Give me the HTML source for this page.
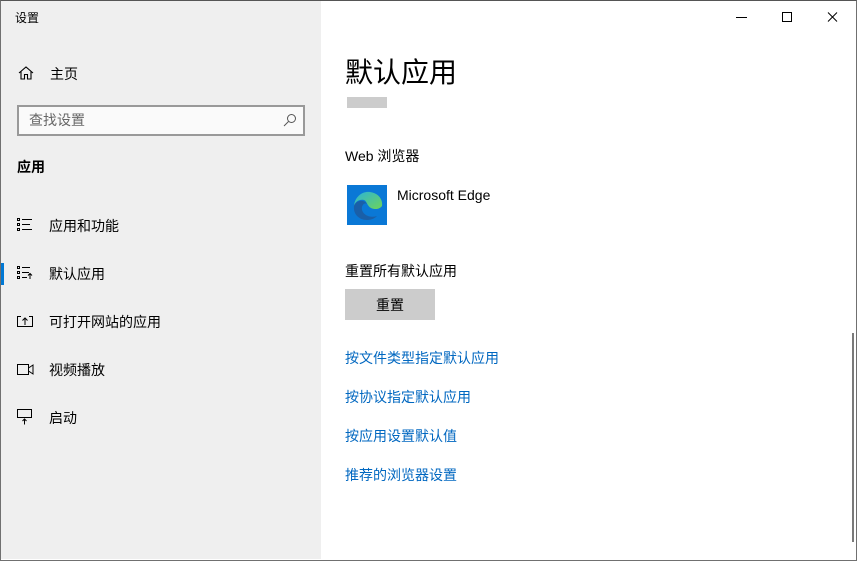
<!DOCTYPE html>
<html><head><meta charset="utf-8"><style>
*{margin:0;padding:0;box-sizing:border-box}
body{width:857px;height:561px;overflow:hidden;font-family:"Liberation Sans","Noto Sans CJK SC",sans-serif;background:#fff;position:relative}
.win{position:absolute;left:0;top:0;width:857px;height:561px;border:1px solid #707070;border-top-color:#555}
.side{position:absolute;left:1px;top:1px;width:320px;height:558px;background:#efefef}
.t{position:absolute;font-size:14px;color:#000;white-space:nowrap;line-height:16px}
.link{color:#0067c0}
.ico{position:absolute}
</style></head><body>
<div class="win"></div>
<div class="side"></div>
<div class="t" style="left:15px;top:10px;font-size:12px">设置</div>
<svg class="ico" style="left:18px;top:66px" width="16" height="14" viewBox="0 0 16 14"><path d="M1 7 L8 1 L15 7 M3 5.5 V13 H6.5 V8.5 H9.5 V13 H13 V5.5" fill="none" stroke="#000" stroke-width="1.1"/></svg>
<div class="t" style="left:50px;top:66px">主页</div>
<div style="position:absolute;left:17px;top:105px;width:288px;height:31px;border:2px solid #999;background:#fafafa"></div>
<div class="t" style="left:29px;top:112px;color:#666">查找设置</div>
<svg class="ico" style="left:283px;top:113px" width="14" height="14" viewBox="0 0 14 14"><circle cx="8.5" cy="5.5" r="4" fill="none" stroke="#555" stroke-width="1"/><path d="M5.5 8.5 L1 13" stroke="#555" stroke-width="1"/></svg>
<div class="t" style="left:17px;top:159px;font-weight:bold">应用</div>

<svg class="ico" style="left:17px;top:218px" width="16" height="14" viewBox="0 0 16 14"><g fill="none" stroke="#000" stroke-width="1"><rect x="0.5" y="0.5" width="2" height="2"/><rect x="0.5" y="5.5" width="2" height="2"/><rect x="0.5" y="10.5" width="2" height="2"/><path d="M5 1.5H15M5 6.5H13M5 11.5H15"/></g></svg>
<div class="t" style="left:49px;top:218px">应用和功能</div>
<div style="position:absolute;left:1px;top:263px;width:3px;height:22px;background:#0078d4"></div>
<svg class="ico" style="left:17px;top:266px" width="16" height="14" viewBox="0 0 16 14"><g fill="none" stroke="#000" stroke-width="1"><rect x="0.5" y="0.5" width="2" height="2"/><rect x="0.5" y="5.5" width="2" height="2"/><rect x="0.5" y="10.5" width="2" height="2"/><path d="M5 1.5H13M5 6.5H12M5 11.5H10M13 13V8M11 9.5L13 7.5L15 9.5"/></g></svg>
<div class="t" style="left:49px;top:266px">默认应用</div>
<svg class="ico" style="left:17px;top:315px" width="16" height="13" viewBox="0 0 16 13"><g fill="none" stroke="#000" stroke-width="1"><path d="M4 1.5H0.5V11.5H15.5V1.5H12M8 10V3M5.5 5.5L8 3L10.5 5.5"/></g></svg>
<div class="t" style="left:49px;top:314px">可打开网站的应用</div>
<svg class="ico" style="left:17px;top:364px" width="17" height="11" viewBox="0 0 17 11"><g fill="none" stroke="#000" stroke-width="1"><rect x="0.5" y="0.5" width="11" height="10"/><path d="M11.5 4L16 1V10L11.5 7"/></g></svg>
<div class="t" style="left:49px;top:362px">视频播放</div>
<svg class="ico" style="left:17px;top:409px" width="16" height="16" viewBox="0 0 16 16"><g fill="none" stroke="#000" stroke-width="1"><rect x="0.5" y="0.5" width="14" height="8"/><path d="M7.5 15.5V10M5.5 12L7.5 10L9.5 12"/></g></svg>
<div class="t" style="left:49px;top:410px">启动</div>

<svg class="ico" style="left:736px;top:12px" width="110" height="12" viewBox="0 0 110 12"><g fill="none" stroke="#000" stroke-width="1"><path d="M0 5.5H11"/><rect x="46.5" y="0.5" width="9" height="9"/><path d="M92 0.5L101 9.5M101 0.5L92 9.5"/></g></svg>

<div class="t" style="left:345px;top:57px;font-size:28px;line-height:32px">默认应用</div>
<div style="position:absolute;left:347px;top:97px;width:40px;height:11px;background:#ccc"></div>
<div class="t" style="left:345px;top:148px">Web 浏览器</div>
<svg class="ico" style="left:347px;top:185px" width="40" height="40" viewBox="0 0 40 40"><defs><linearGradient id="g" x1="0" y1="0" x2="1" y2="1"><stop offset="0" stop-color="#2bb3d9"/><stop offset="1" stop-color="#6dd35a"/></linearGradient></defs><rect width="40" height="40" fill="#0a78d6"/><path d="M7 21C8 11 16 6 23 7C31 8 36 14 35 21C33 24 28 25 24 23C20 21 20 16 17 15C12 14 8 17 7 21Z" fill="url(#g)"/><path d="M7 21C6 29 12 35 20 35C25 35 28 33 30 31C24 33 17 31 15 25C14 20 18 17 20 19C17 14 9 15 7 21Z" fill="#1a5fa8"/></svg>
<div class="t" style="left:397px;top:187px">Microsoft Edge</div>
<div class="t" style="left:345px;top:263px">重置所有默认应用</div>
<div style="position:absolute;left:345px;top:289px;width:90px;height:31px;background:#ccc"></div>
<div class="t" style="left:376px;top:297px">重置</div>
<div class="t link" style="left:345px;top:350px">按文件类型指定默认应用</div>
<div class="t link" style="left:345px;top:389px">按协议指定默认应用</div>
<div class="t link" style="left:345px;top:428px">按应用设置默认值</div>
<div class="t link" style="left:345px;top:467px">推荐的浏览器设置</div>
<div style="position:absolute;left:852px;top:333px;width:2px;height:209px;background:#7a7a7a"></div>
</body></html>
